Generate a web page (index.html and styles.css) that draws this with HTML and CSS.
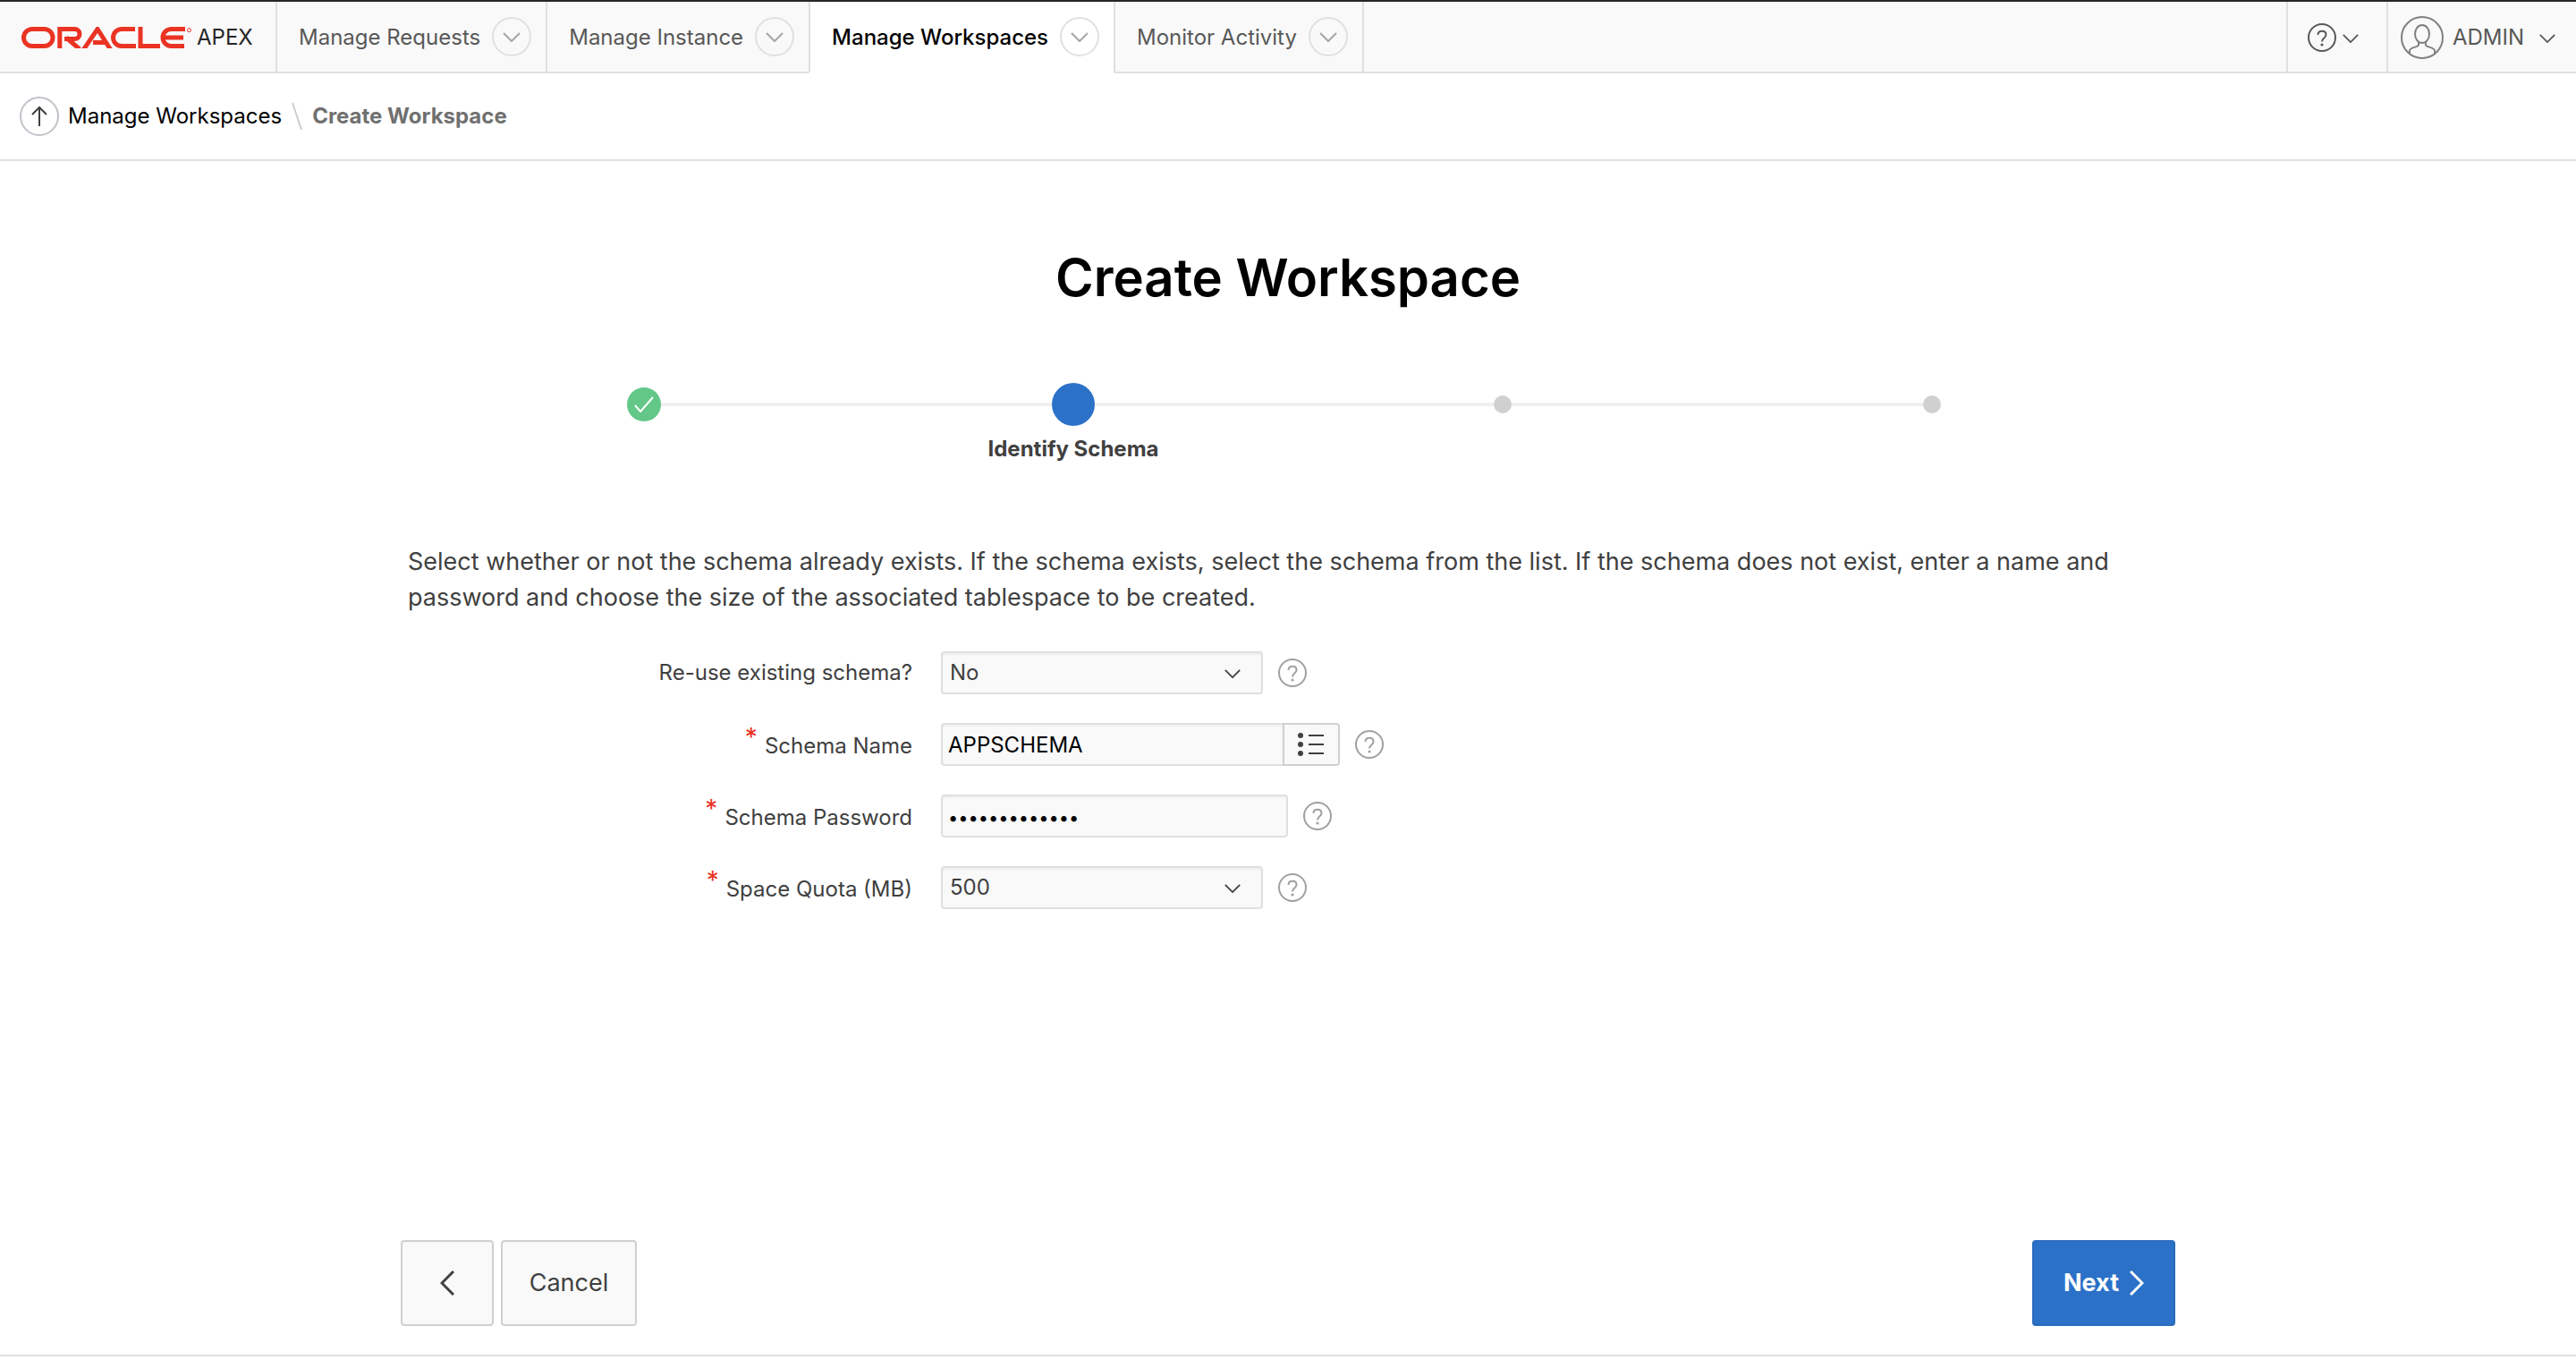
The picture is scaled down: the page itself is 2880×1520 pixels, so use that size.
FILE: index.html
```html
<!DOCTYPE html>
<html lang="en">
<head>
<meta charset="utf-8">
<title>Create Workspace</title>
<link rel="stylesheet" href="styles.css">
</head>
<body>
<svg class="sprite" aria-hidden="true">
  <symbol id="chevron" viewBox="0 0 22 12"><path d="M2 2l9 9 9-9"/></symbol>
  <symbol id="help" viewBox="0 0 32 32"><circle cx="16" cy="16" r="15"/><path d="M11.500 13c0-2.800 2-4.300 4.700-4.300s4.300 1.700 4.300 4c0 3.800-4.500 3.800-4.500 7.800"/><circle class="dot" cx="16" cy="24" r="1.600"/></symbol>
</svg>

<header class="topbar">
  <a class="brand" href="#" aria-label="Oracle APEX">
    <svg class="logo" viewBox="0 0 196 24" aria-hidden="true">
      <rect x="2.500" y="2.500" width="32.500" height="19" rx="9.500"/>
      <path d="M42.800 24V2.500H59.500a5.500 5.500 0 0 1 0 11H48M50 12l15 13"/>
      <path d="M69 26L85 2.500L100 26M80 17.500H94"/>
      <path d="M127 2.500H112a9.500 9.500 0 0 0 0 19H128"/>
      <path d="M133 0V21.500H155"/>
      <path d="M183 2.500H167.500a9.500 9.500 0 0 0 0 19H182M158 12H181"/>
      <circle class="mark" cx="187.500" cy="3.700" r="2"/>
    </svg>
    <span class="product">APEX</span>
  </a>
  <nav class="menu">
    <div class="tab"><a href="#">Manage Requests</a><button type="button" class="more" aria-label="Manage Requests menu"><svg><use href="#chevron"/></svg></button></div>
    <div class="tab"><a href="#">Manage Instance</a><button type="button" class="more" aria-label="Manage Instance menu"><svg><use href="#chevron"/></svg></button></div>
    <div class="tab current"><a href="#">Manage Workspaces</a><button type="button" class="more" aria-label="Manage Workspaces menu"><svg><use href="#chevron"/></svg></button></div>
    <div class="tab"><a href="#">Monitor Activity</a><button type="button" class="more" aria-label="Monitor Activity menu"><svg><use href="#chevron"/></svg></button></div>
  </nav>
  <button type="button" class="tool tool-help" aria-label="Help">
    <svg class="help-icon"><use href="#help"/></svg>
    <svg class="caret"><use href="#chevron"/></svg>
  </button>
  <button type="button" class="tool tool-user">
    <svg class="avatar" viewBox="0 0 48 48" aria-hidden="true"><circle cx="24" cy="24" r="23"/><ellipse cx="24" cy="20" rx="8" ry="10"/><path d="M20 29v3.500c0 2-10 2.500-10 6V42M28 29v3.500c0 2 10 2.500 10 6V42"/></svg>
    <span>ADMIN</span>
    <svg class="caret"><use href="#chevron"/></svg>
  </button>
</header>

<nav class="breadcrumb" aria-label="Breadcrumb">
  <a class="up" href="#" aria-label="Up one level"><svg viewBox="0 0 20 24"><path d="M10 23V2M2 10l8-8 8 8"/></svg></a>
  <a class="crumb" href="#">Manage Workspaces</a>
  <svg class="slash" viewBox="0 0 12 30" aria-hidden="true"><path d="M1 0l10 30"/></svg>
  <span class="crumb here" aria-current="page">Create Workspace</span>
</nav>

<main class="wizard">
  <h1>Create Workspace</h1>
  <ol class="steps">
    <li class="step done"><span class="marker"><svg viewBox="0 0 22 18" aria-hidden="true"><path d="M1 10l6 7L21 1"/></svg></span></li>
    <li class="step active" aria-current="step"><span class="marker"></span><span class="step-label">Identify Schema</span></li>
    <li class="step"><span class="marker"></span></li>
    <li class="step"><span class="marker"></span></li>
  </ol>

  <form class="form">
    <p class="intro">Select whether or not the schema already exists. If the schema exists, select the schema from the list. If the schema does not exist, enter a name and password and choose the size of the associated tablespace to be created.</p>
    <div class="row">
      <label for="reuse">Re-use existing schema?</label>
      <span class="select"><select id="reuse"><option>No</option><option>Yes</option></select><svg class="caret"><use href="#chevron"/></svg></span>
      <button type="button" class="hint" aria-label="Help for re-use existing schema"><svg><use href="#help"/></svg></button>
    </div>
    <div class="row">
      <label class="required" for="name">Schema Name</label>
      <span class="combo"><input id="name" type="text" value="APPSCHEMA"><button type="button" aria-label="List schemas"><svg viewBox="0 0 30 28"><g class="dot"><circle cx="3" cy="4" r="3"/><circle cx="3" cy="14" r="3"/><circle cx="3" cy="24" r="3"/></g><path d="M12 4h17M12 14h17M12 24h17"/></svg></button></span>
      <button type="button" class="hint" aria-label="Help for schema name"><svg><use href="#help"/></svg></button>
    </div>
    <div class="row">
      <label class="required" for="password">Schema Password</label>
      <input id="password" class="password" type="password" value="appschema1234">
      <button type="button" class="hint" aria-label="Help for schema password"><svg><use href="#help"/></svg></button>
    </div>
    <div class="row">
      <label class="required" for="quota">Space Quota (MB)</label>
      <span class="select"><select id="quota"><option>500</option><option>1024</option></select><svg class="caret"><use href="#chevron"/></svg></span>
      <button type="button" class="hint" aria-label="Help for space quota"><svg><use href="#help"/></svg></button>
    </div>
  </form>

  <div class="actions">
    <button type="button" class="btn back" aria-label="Previous"><svg viewBox="0 0 16 28"><path d="M15 1L2 14l13 13"/></svg></button>
    <button type="button" class="btn cancel">Cancel</button>
    <button type="button" class="btn next">Next<svg viewBox="0 0 16 28"><path d="M1 1l13 13L1 27"/></svg></button>
  </div>
</main>
</body>
</html>
```
FILE: styles.css
```css
* { box-sizing: border-box; }

body {
  display: flex;
  flex-direction: column;
  min-height: 100vh;
  margin: 0;
  padding-bottom: 4px;
  background: #fff;
  color: #404040;
  font: 24px/32px Inter, "Liberation Sans", sans-serif;
}

button, input, select { margin: 0; padding: 0; border: 0; background: none; color: inherit; font: inherit; }
a { color: inherit; text-decoration: none; }
svg { display: block; flex: none; fill: none; stroke: currentColor; stroke-width: 2; }
.sprite { position: absolute; width: 0; height: 0; }
.dot { fill: currentColor; stroke: none; }

/* Top bar */
.topbar { display: flex; height: 82px; border-top: 2px solid #262626; background: #f9f9f9; color: #585858; }
.brand, .menu::after, .tab, .tool { border-bottom: 2px solid #e0e0e0; }
.brand { display: flex; align-items: center; padding: 2px 24px 0; width: 308px; color: #262626; }
.logo { width: 196px; height: 24px; color: #eb3323; stroke-width: 5; }
.mark { stroke-width: 1; }
.menu { display: flex; flex: 1; }
.menu::after { content: ""; flex: 1; border-left: 2px solid #e0e0e0; }
.tab { display: flex; align-items: center; gap: 13px; padding: 0 16px 0 24px; border-left: 2px solid #e0e0e0; }
.tab a { padding-top: 2px; }
.tab.current { border-bottom-color: #fff; background: #fff; color: #000; font-weight: 500; }
.more { display: grid; place-items: center; width: 44px; height: 44px; border: 2px solid #e0e0e0; border-radius: 50%; color: #a6a6a6; }
.more svg { width: 22px; height: 12px; }
.caret { width: 20px; height: 11px; }
.tool { display: flex; align-items: center; padding-top: 2px; border-left: 2px solid #e0e0e0; }
.tool-help { gap: 6px; width: 112px; padding-left: 22px; }
.tool-user { gap: 10px; padding-right: 22px; padding-left: 14px; }
.tool-user .caret { margin-left: 6px; }
.help-icon { width: 32px; height: 32px; }
.avatar { width: 48px; height: 48px; color: #808080; }

/* Breadcrumb */
.breadcrumb { display: flex; align-items: center; height: 98px; padding: 0 22px; border-bottom: 2px solid #e0e0e0; }
.up { display: grid; place-items: center; width: 44px; height: 44px; margin-right: 10px; border: 2px solid #bfc4c9; border-radius: 50%; }
.up svg { width: 20px; height: 24px; }
.crumb { color: #000; }
.slash { width: 12px; height: 30px; margin: 0 11px; color: #ccc; }
.here { color: #707070; font-weight: 700; }

/* Wizard */
.wizard { display: flex; flex: 1; flex-direction: column; align-items: center; padding-bottom: 32px; border-bottom: 2px solid #e0e0e0; }
h1 { margin: 90px 0 78px; color: #000; font-size: 58px; line-height: 80px; font-weight: 600; }
.steps { display: flex; width: 1920px; max-width: 100%; height: 112px; margin: 0; padding: 0; list-style: none; }
.step { display: flex; flex: 1; flex-direction: column; align-items: center; position: relative; }
.step + .step::before { content: ""; position: absolute; top: 22px; right: 50%; width: 100%; height: 4px; background: #f0f0f0; }
.marker { display: grid; place-items: center; position: relative; z-index: 1; width: 20px; height: 20px; margin: 14px 0; border-radius: 50%; background: #d0d0d0; }
.done .marker { width: 38px; height: 38px; margin: 5px 0; background: #63c788; color: #fff; }
.done svg { width: 22px; height: 18px; }
.active .marker { width: 48px; height: 48px; margin: 0; background: #2b71c7; }
.step-label { margin-top: 10px; font-weight: 700; }

.form { width: 1984px; max-width: 100%; padding: 68px 8px; }
.intro { margin: 0 0 40px; font-size: 27px; line-height: 40px; }
.row { display: flex; align-items: center; height: 48px; margin-bottom: 32px; }
.row label { width: 564px; margin-right: 32px; text-align: right; }
.required::before { content: "*"; display: inline-block; margin-right: 8px; color: #eb3323; font-size: 28px; line-height: 20px; vertical-align: 8px; }
.row input, .row select { height: 48px; border: 2px solid #dfdfdf; border-radius: 4px; background: #f9f9f9; box-shadow: inset 0 2px 2px rgba(0, 0, 0, .04); }
.row input { padding: 0 6px; color: #000; }
.row select { width: 100%; padding: 0 8px; appearance: none; }
.select { position: relative; width: 360px; }
.select .caret { position: absolute; top: 19px; right: 24px; pointer-events: none; }
.combo { display: flex; }
.combo input { width: 382px; border-right: 0; border-radius: 4px 0 0 4px; }
.combo button { display: grid; place-items: center; width: 64px; height: 48px; border: 2px solid #d0d0d0; border-radius: 0 4px 4px 0; background: #f9f9f9; }
.combo svg { width: 30px; height: 28px; }
.row .password { width: 388px; padding-top: 4px; font-size: 20px; }
.hint { margin-left: 17px; color: #a0a0a0; }
.hint svg { width: 32px; height: 32px; }

.actions { display: flex; gap: 8px; width: 1984px; max-width: 100%; margin-top: auto; }
.btn { display: flex; align-items: center; justify-content: center; gap: 12px; height: 96px; border: 2px solid #d0d0d0; border-radius: 4px; background: #f9f9f9; font-size: 27px; }
.btn svg { width: 16px; height: 28px; stroke-width: 3; }
.back { width: 104px; }
.cancel { width: 152px; }
.next { width: 160px; margin-left: auto; border-color: #2b6cbf; background: #2b71c7; color: #fff; font-weight: 700; }
```
